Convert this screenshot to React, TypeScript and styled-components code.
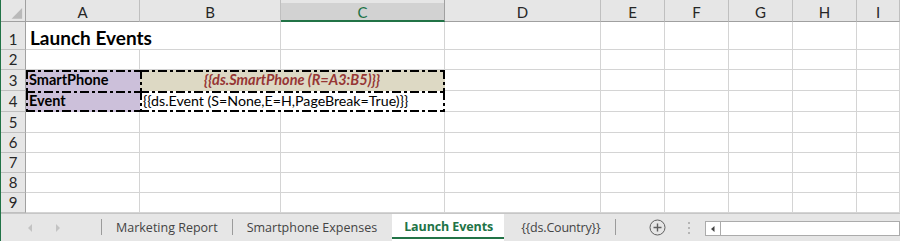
import React from "react";
import styled, { createGlobalStyle, css } from "styled-components";

const GlobalStyle = createGlobalStyle`
  html, body {
    margin: 0;
    padding: 0;
    background: #ffffff;
    overflow: hidden;
  }
`;

const COLS = ["A", "B", "C", "D", "E", "F", "G", "H", "I"];
const ROW_HEIGHTS = [28, 20, 21, 21, 21, 20, 20, 20, 20];

type Side = "t" | "l" | "r" | "b";

type CellSpec = {
  text?: string;
  span?: number;
  fill?: string;
  frame?: string;
  variant?: "title" | "label" | "tag" | "plain";
  align?: "left" | "center";
};

// row+col -> spec ; cells covered by a span are skipped
const SPECIAL: Record<string, CellSpec> = {
  "1A": { text: "Launch Events", span: 2, variant: "title" },
  "3A": { text: "SmartPhone", fill: "#ccc0da", frame: "tl", variant: "label" },
  "3B": {
    text: "{{ds.SmartPhone (R=A3:B5)}}",
    span: 2,
    fill: "#ddd9c4",
    frame: "tlr",
    variant: "tag",
    align: "center",
  },
  "4A": { text: "Event", fill: "#ccc0da", frame: "tlb", variant: "label" },
  "4B": {
    text: "{{ds.Event (S=None,E=H,PageBreak=True)}}",
    span: 2,
    frame: "tlrb",
    variant: "plain",
  },
};

const dash = (dir: string) =>
  `repeating-linear-gradient(${dir}, #000 0 9px, transparent 9px 12px, #000 12px 15px, transparent 15px 18px)`;

const frameCss = (frame: string, fill: string) => {
  const sides = frame.split("") as Side[];
  const imgs: string[] = [];
  const pos: string[] = [];
  const size: string[] = [];
  sides.forEach((s) => {
    if (s === "t") {
      imgs.push(dash("90deg"));
      pos.push("0 0");
      size.push("100% 2px");
    }
    if (s === "b") {
      imgs.push(dash("90deg"));
      pos.push("0 100%");
      size.push("100% 2px");
    }
    if (s === "l") {
      imgs.push(dash("180deg"));
      pos.push("0 0");
      size.push("2px 100%");
    }
    if (s === "r") {
      imgs.push(dash("180deg"));
      pos.push("100% 0");
      size.push("2px 100%");
    }
  });
  return css`
    border-color: transparent;
    background-color: ${fill};
    background-image: ${imgs.join(", ")};
    background-position: ${pos.join(", ")};
    background-size: ${size.join(", ")};
    background-repeat: no-repeat;
    background-origin: border-box;
  `;
};

const App = () => {
  const cells: React.ReactNode[] = [];
  ROW_HEIGHTS.forEach((_, ri) => {
    const row = ri + 1;
    cells.push(<RowHead key={`rh${row}`}>{row}</RowHead>);
    let skip = 0;
    COLS.forEach((col) => {
      if (skip > 0) {
        skip--;
        return;
      }
      const spec = SPECIAL[`${row}${col}`];
      if (spec) {
        skip = (spec.span || 1) - 1;
        cells.push(
          <Cell
            key={`${row}${col}`}
            $span={spec.span || 1}
            $fill={spec.fill || "#ffffff"}
            $frame={spec.frame}
            $variant={spec.variant || "plain"}
            $align={spec.align || "left"}
          >
            {spec.text}
          </Cell>
        );
      } else {
        cells.push(<Cell key={`${row}${col}`} $span={1} $fill="#ffffff" $variant="plain" $align="left" />);
      }
    });
  });

  return (
    <>
      <GlobalStyle />
      <Window>
        <Sheet>
          <Corner>
            <svg width="25" height="22" viewBox="0 0 25 22">
              <polygon points="22,8 22,19 11,19" fill="#b9b9b9" />
            </svg>
          </Corner>
          {COLS.map((c) => (
            <ColHead key={c} $selected={c === "C"}>
              {c}
            </ColHead>
          ))}
          {cells}
        </Sheet>
        <TabBar>
          <NavArrows>
            <svg width="8" height="10" viewBox="0 0 8 10">
              <polygon points="6,1 6,9 2,5" fill="#c3c3c3" />
            </svg>
            <svg width="8" height="10" viewBox="0 0 8 10">
              <polygon points="2,1 2,9 6,5" fill="#c3c3c3" />
            </svg>
          </NavArrows>
          <Sep />
          <Tab>Marketing Report</Tab>
          <Sep />
          <Tab>Smartphone Expenses</Tab>
          <Tab $active>Launch Events</Tab>
          <Tab $tight>{"{{ds.Country}}"}</Tab>
          <Sep />
          <AddButton>
            <svg width="17" height="17" viewBox="0 0 17 17">
              <circle cx="8.5" cy="8.5" r="7.5" fill="none" stroke="#5f5f5f" strokeWidth="1" />
              <path d="M8.5 4.5v8M4.5 8.5h8" stroke="#5f5f5f" strokeWidth="1.4" />
            </svg>
          </AddButton>
          <Grip>
            <i />
            <i />
            <i />
          </Grip>
          <HScroll>
            <ScrollArrow>
              <svg width="6" height="8" viewBox="0 0 6 8">
                <polygon points="4.5,1 4.5,7 1,4" fill="#444444" />
              </svg>
            </ScrollArrow>
          </HScroll>
        </TabBar>
      </Window>
    </>
  );
};

const Window = styled.div`
  width: 899px;
  height: 241px;
  border-left: 1px solid #217346;
  display: flex;
  flex-direction: column;
  overflow: hidden;
  background: #ffffff;
`;

const Sheet = styled.div`
  display: grid;
  grid-template-columns: 25px 114px 141px 164px 156px 64px 64px 64px 64px 1fr;
  grid-template-rows: 22px ${ROW_HEIGHTS.map((h) => `${h}px`).join(" ")};
  font-family: Lato, "Liberation Sans", sans-serif;
`;

const Corner = styled.div`
  background: #e6e6e6;
  border-right: 1px solid #a0a0a0;
  border-bottom: 1px solid #a0a0a0;
  box-sizing: border-box;
  display: flex;
  svg {
    display: block;
  }
`;

const ColHead = styled.div<{ $selected?: boolean }>`
  box-sizing: border-box;
  background: #e6e6e6;
  border-bottom: 1px solid #a0a0a0;
  border-right: 1px solid #bfbfbf;
  display: flex;
  align-items: center;
  justify-content: center;
  padding-top: 3px;
  font-size: 15px;
  color: #262626;
  ${(p) =>
    p.$selected &&
    css`
      background: linear-gradient(#e6e6e6 0 3px, #d2d2d2 3px);
      border-bottom: 2px solid #217346;
      border-right-color: #a0a0a0;
      color: #217346;
    `}
`;

const RowHead = styled.div`
  box-sizing: border-box;
  background: #e6e6e6;
  border-right: 1px solid #a0a0a0;
  border-bottom: 1px solid #bfbfbf;
  display: flex;
  align-items: flex-end;
  justify-content: center;
  padding-bottom: 1px;
  font-size: 15px;
  color: #262626;
`;

const variantCss = {
  title: css`
    font-size: 19px;
    font-weight: 700;
    color: #000000;
    padding: 0 4px 2px;
  `,
  label: css`
    font-size: 14.5px;
    font-weight: 700;
    color: #000000;
    padding: 0 3px 3px;
  `,
  tag: css`
    font-size: 14.5px;
    font-weight: 700;
    font-style: italic;
    color: #963634;
    padding: 0 4px 3px;
  `,
  plain: css`
    font-size: 14.2px;
    color: #000000;
    padding: 0 3px 3px;
  `,
};

const Cell = styled.div<{
  $span: number;
  $fill: string;
  $frame?: string;
  $variant: "title" | "label" | "tag" | "plain";
  $align: "left" | "center";
}>`
  box-sizing: border-box;
  grid-column: span ${(p) => p.$span};
  border-right: 1px solid #d4d4d4;
  border-bottom: 1px solid #d4d4d4;
  background: ${(p) => p.$fill};
  display: flex;
  align-items: flex-end;
  justify-content: ${(p) => (p.$align === "center" ? "center" : "flex-start")};
  white-space: nowrap;
  overflow: visible;
  line-height: 1;
  ${(p) => variantCss[p.$variant]}
  ${(p) => p.$frame && frameCss(p.$frame, p.$fill)}
`;

const TabBar = styled.div`
  flex: 1;
  display: flex;
  align-items: stretch;
  background: #e6e6e6;
  border-top: 1px solid #c6c6c6;
  font-family: "Open Sans", "Noto Sans", sans-serif;
  font-size: 12.5px;
  color: #444444;
`;

const NavArrows = styled.div`
  width: 100px;
  display: flex;
  align-items: center;
  padding-left: 25px;
  gap: 20px;
  box-sizing: border-box;
  svg {
    display: block;
  }
`;

const Sep = styled.div`
  width: 1px;
  margin: 5px 0 6px;
  background: #9b9b9b;
`;

const Tab = styled.div<{ $active?: boolean; $tight?: boolean }>`
  display: flex;
  align-items: center;
  padding: 0 14px;
  white-space: nowrap;
  ${(p) =>
    p.$tight &&
    css`
      padding: 0 14px 0 17px;
      letter-spacing: -0.2px;
    `}
  ${(p) =>
    p.$active &&
    css`
      background: #ffffff;
      color: #217346;
      font-weight: 700;
      margin-left: 1px;
      padding: 0 11px 0 12px;
      letter-spacing: -0.1px;
      box-shadow: inset 0 -2px 0 #217346;
      border-bottom: 2px solid #ffffff;
    `}
`;

const AddButton = styled.div`
  display: flex;
  align-items: center;
  margin-left: 33px;
  svg {
    display: block;
  }
`;

const Grip = styled.div`
  display: flex;
  flex-direction: column;
  justify-content: center;
  gap: 3px;
  margin-left: 22px;
  i {
    display: block;
    width: 2px;
    height: 2px;
    background: #b5b5b5;
  }
`;

const HScroll = styled.div`
  flex: 1;
  margin: 7px 0 5px 15px;
  background: #ffffff;
  border: 1px solid #ababab;
  display: flex;
`;

const ScrollArrow = styled.div`
  width: 14px;
  border-right: 1px solid #ababab;
  display: flex;
  align-items: center;
  justify-content: center;
  svg {
    display: block;
  }
`;

export default App;
